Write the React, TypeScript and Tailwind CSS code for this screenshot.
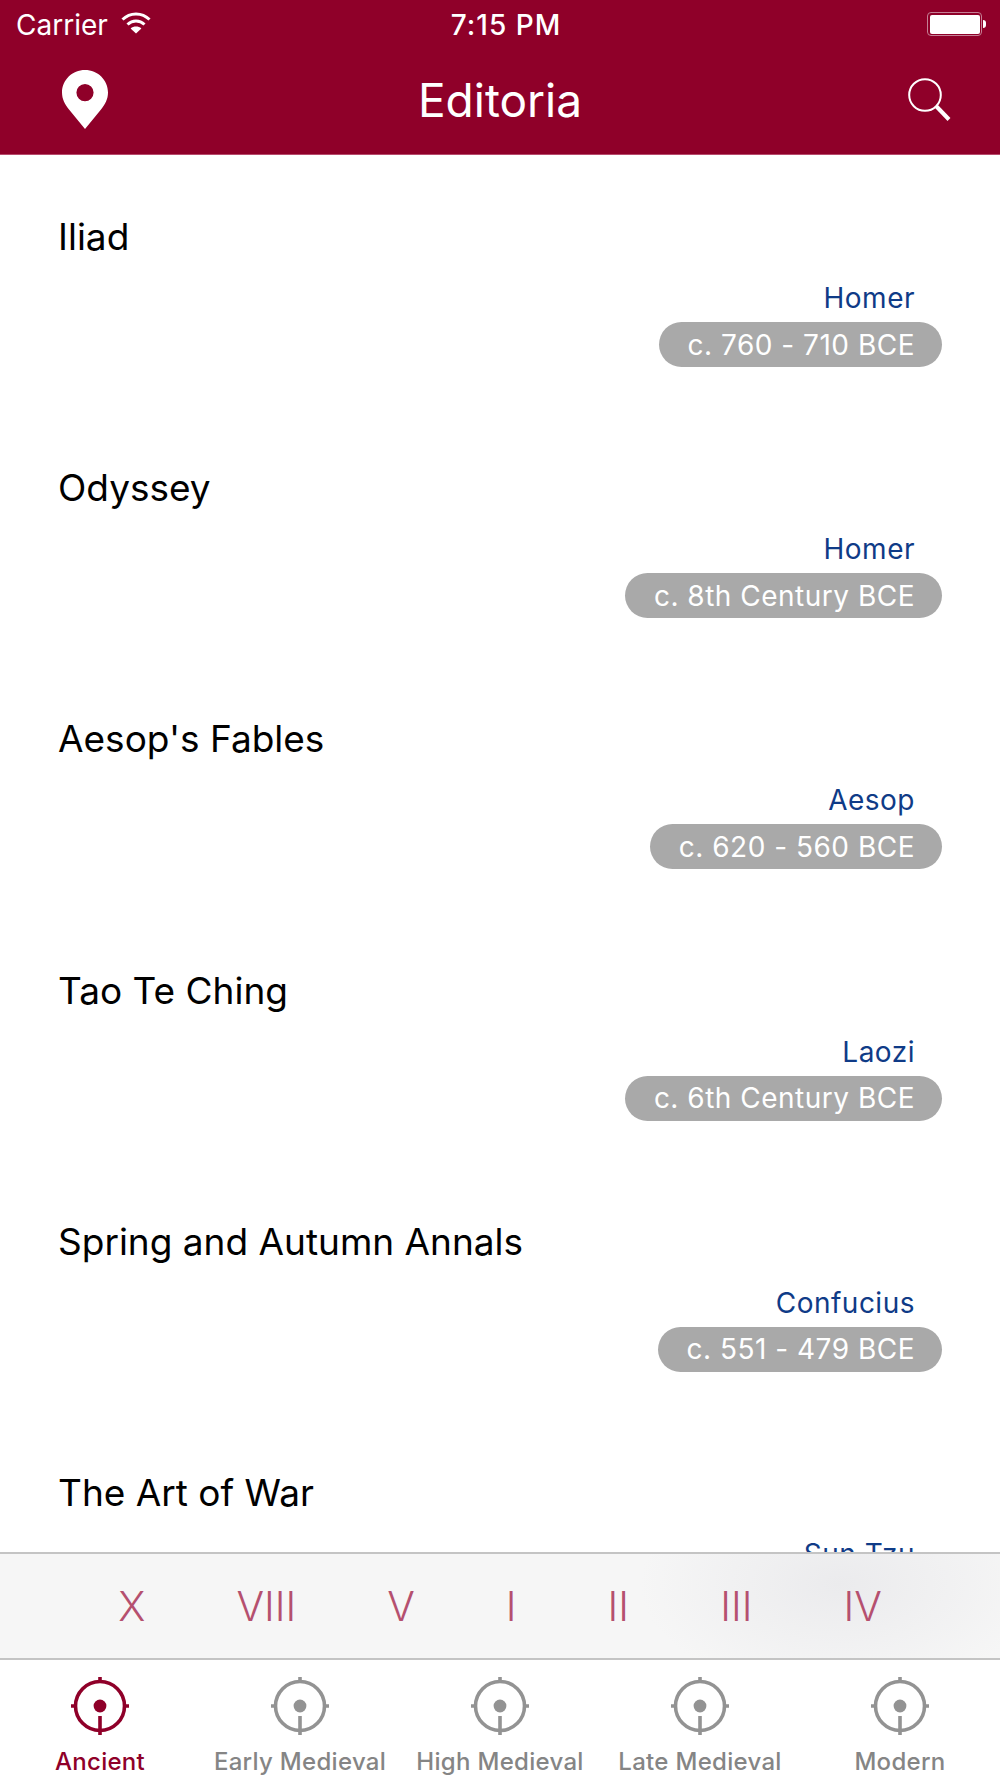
const books = [
  { title: 'Iliad', author: 'Homer', date: 'c. 760 - 710 BCE' },
  { title: 'Odyssey', author: 'Homer', date: 'c. 8th Century BCE' },
  { title: "Aesop's Fables", author: 'Aesop', date: 'c. 620 - 560 BCE' },
  { title: 'Tao Te Ching', author: 'Laozi', date: 'c. 6th Century BCE' },
  { title: 'Spring and Autumn Annals', author: 'Confucius', date: 'c. 551 - 479 BCE' },
  { title: 'The Art of War', author: 'Sun Tzu' },
];

const numerals = ['X', 'VIII', 'V', 'I', 'II', 'III', 'IV'];

const tabs = ['Ancient', 'Early Medieval', 'High Medieval', 'Late Medieval', 'Modern'];

function TargetIcon() {
  return (
    <svg width="58" height="58" viewBox="0 0 58 58" fill="none" stroke="currentColor" strokeWidth="3.6">
      <circle cx="29" cy="29" r="24.5" />
      <circle cx="29" cy="29" r="6.4" fill="currentColor" stroke="none" />
      <path d="M29 0v5M29 39v19M0 29h5M53 29h5" />
    </svg>
  );
}

function StatusBar() {
  return (
    <div className="flex h-[48px] items-center justify-between pl-4 pr-[14px] text-white">
      <div className="flex w-[200px] items-center gap-[13px]">
        <span className="translate-y-[1px] text-[28px] leading-none">Carrier</span>
        <svg width="30" height="22" viewBox="0 0 30 22" fill="none" stroke="white" strokeWidth="3" className="-translate-y-[1px]">
          <path d="M1.5 7.5C9 0 21 0 28.5 7.5" />
          <path d="M6.5 12.5C11.5 7.8 18.5 7.8 23.5 12.5" />
          <path d="M15 21.5L9.6 16.4C12.6 13.8 17.4 13.8 20.4 16.4Z" fill="white" stroke="none" />
        </svg>
      </div>
      <span className="translate-x-[5px] translate-y-[1px] text-[28px] font-medium leading-none tracking-[1px]">7:15 PM</span>
      <div className="flex w-[200px] items-center justify-end gap-[1px]">
        <div className="h-[24px] w-[55px] rounded-[4px] border-[1.5px] border-[#c47f94] p-[1.5px]">
          <div className="h-full w-full rounded-[2px] bg-white" />
        </div>
        <div className="h-[8px] w-[3px] rounded-r-full bg-white" />
      </div>
    </div>
  );
}

function NavBar() {
  return (
    <div className="flex h-[107px] items-center justify-between border-b-[1.5px] border-[#b84a6c] pb-[3px]">
      <div className="flex w-[150px] justify-start pl-[62px]">
        <svg width="46" height="60" viewBox="0 0 46 60">
          <path
            fillRule="evenodd"
            fill="white"
            d="M23 0C10.3 0 0 10 0 22.6C0 29 2.8 34.5 7 39.6L23 59L39 39.6C43.2 34.5 46 29 46 22.6C46 10 35.7 0 23 0ZM23 14A8.6 8.6 0 1 1 23 31.2A8.6 8.6 0 1 1 23 14Z"
          />
        </svg>
      </div>
      <h1 className="text-[46px] font-normal leading-none text-white">Editoria</h1>
      <div className="flex w-[150px] justify-end pr-[48px]">
        <svg width="44" height="44" viewBox="0 0 44 44" fill="none" stroke="white">
          <circle cx="17" cy="17" r="15.8" strokeWidth="2" />
          <path d="M28.5 28.5L41 41.5" strokeWidth="4" />
        </svg>
      </div>
    </div>
  );
}

export default function App() {
  return (
    <div className="flex h-[1778px] w-[1000px] flex-col overflow-hidden bg-white font-['Inter',sans-serif]">
      <header className="bg-[#8f0029]">
        <StatusBar />
        <NavBar />
      </header>

      <main className="min-h-0 flex-1 overflow-hidden">
        {books.map((book) => (
          <div key={book.title} className="flex h-[251.2px] flex-col pl-[58px] pr-[58px] pt-[59px]">
            <div className="text-[37px] leading-[46px] text-black">{book.title}</div>
            <div className="mt-[21px] flex flex-col items-end">
              <span className="pr-[27px] text-[28px] leading-[34px] tracking-[0.5px] text-[#0f3b87]">{book.author}</span>
              {book.date && (
                <span className="mt-[7px] flex h-[45px] items-center rounded-full bg-[#a9a9a9] pl-[29px] pr-[27px] text-[28px] tracking-[0.5px] text-white">
                  {book.date}
                </span>
              )}
            </div>
          </div>
        ))}
      </main>

      <div className="flex h-[108px] items-center justify-center gap-[91px] border-y-2 border-[#c4c4c4] bg-[#f6f6f6] bg-[radial-gradient(ellipse_200px_110px_at_840px_30px,#ebebed,#f6f6f6)] text-[41px] font-light text-[#b5506f]">
        {numerals.map((n) => (
          <span key={n} className="leading-none">
            {n}
          </span>
        ))}
      </div>

      <nav className="grid h-[118px] grid-cols-5 pt-[17px]">
        {tabs.map((tab, i) => (
          <div key={tab} className={i === 0 ? 'flex flex-col items-center text-[#8f0029]' : 'flex flex-col items-center text-[#939393]'}>
            <TargetIcon />
            <span className={i === 0 ? 'mt-[12px] text-[24px] font-medium leading-[30px] tracking-[0.3px]' : 'mt-[12px] text-[24px] font-medium leading-[30px] tracking-[0.3px] text-[#858585]'}>
              {tab}
            </span>
          </div>
        ))}
      </nav>
    </div>
  );
}
